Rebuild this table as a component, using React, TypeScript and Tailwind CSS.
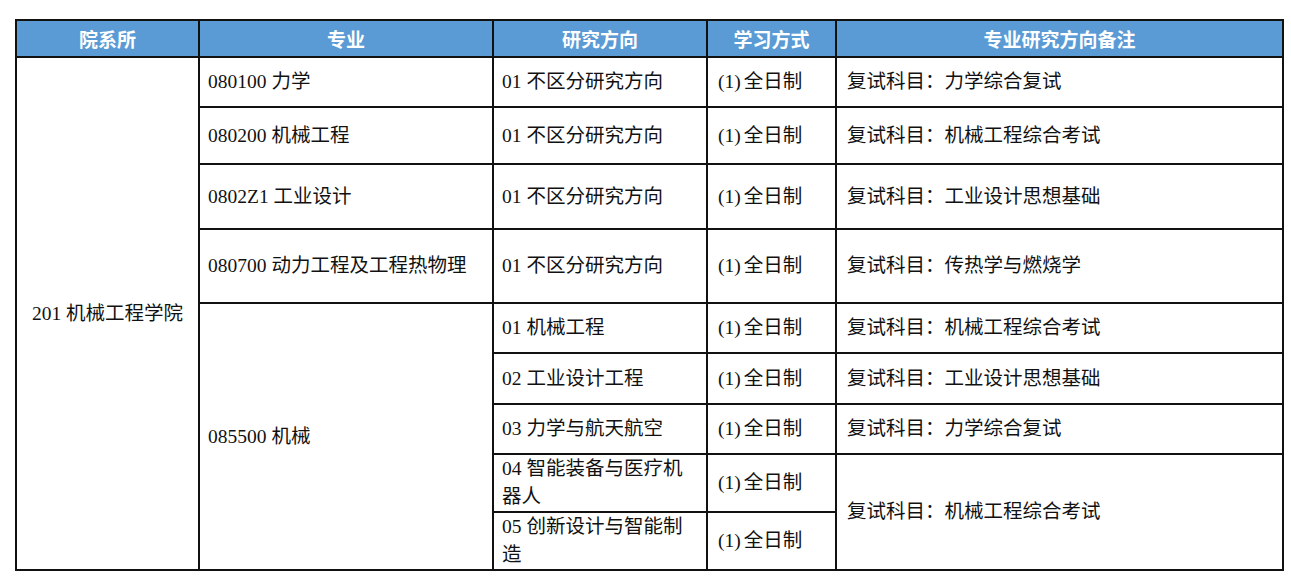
import React from 'react';

const body = 'border-2 border-[#111] px-[8px] align-middle text-left';

type Row = {
  h: string;
  major?: { text: string; span?: number };
  dir: string;
  note?: { text: string; span?: number };
};

const rows: Row[] = [
  { h: 'h-[50px]', major: { text: '080100 力学' }, dir: '01 不区分研究方向', note: { text: '复试科目：力学综合复试' } },
  { h: 'h-[57px]', major: { text: '080200 机械工程' }, dir: '01 不区分研究方向', note: { text: '复试科目：机械工程综合考试' } },
  { h: 'h-[65px]', major: { text: '0802Z1 工业设计' }, dir: '01 不区分研究方向', note: { text: '复试科目：工业设计思想基础' } },
  { h: 'h-[74px]', major: { text: '080700 动力工程及工程热物理' }, dir: '01 不区分研究方向', note: { text: '复试科目：传热学与燃烧学' } },
  { h: 'h-[50px]', major: { text: '085500 机械', span: 5 }, dir: '01 机械工程', note: { text: '复试科目：机械工程综合考试' } },
  { h: 'h-[51px]', dir: '02 工业设计工程', note: { text: '复试科目：工业设计思想基础' } },
  { h: 'h-[50px]', dir: '03 力学与航天航空', note: { text: '复试科目：力学综合复试' } },
  { h: 'h-[57px]', dir: '04 智能装备与医疗机器人', note: { text: '复试科目：机械工程综合考试', span: 2 } },
  { h: 'h-[57px]', dir: '05 创新设计与智能制造' },
];

export default function App() {
  return (
    <div className="min-h-[581px] w-[1291px] bg-white pt-[19px] pl-[15px]">
      <table
        className="w-[1267px] table-fixed border-collapse border-2 border-[#111] text-[19.5px] leading-[28px] text-[#111]"
        style={{ fontFamily: '"Liberation Serif", "Noto Sans CJK SC", serif' }}
      >
        <colgroup>
          <col className="w-[183px]" />
          <col className="w-[294px]" />
          <col className="w-[214px]" />
          <col className="w-[129px]" />
          <col className="w-[447px]" />
        </colgroup>
        <thead>
          <tr
            className="h-[37px] bg-[#5b9bd5] text-white font-bold"
            style={{ fontFamily: '"Noto Sans CJK SC", sans-serif' }}
          >
            {['院系所', '专业', '研究方向', '学习方式', '专业研究方向备注'].map((t) => (
              <th key={t} className="border-2 border-[#111] text-center align-middle text-[19px] leading-[24px] font-bold">
                {t}
              </th>
            ))}
          </tr>
        </thead>
        <tbody>
          {rows.map((r, i) => (
            <tr key={i} className={r.h}>
              {i === 0 && (
                <td rowSpan={9} className="border-2 border-[#111] text-center align-middle">
                  201 机械工程学院
                </td>
              )}
              {r.major && (
                <td rowSpan={r.major.span ?? 1} className={body}>
                  {r.major.text}
                </td>
              )}
              <td className={body}>{r.dir}</td>
              <td className={body + ' pl-[10px]'}>
                (1)<span className="ml-[3px]">全日制</span>
              </td>
              {r.note && (
                <td rowSpan={r.note.span ?? 1} className={body + ' pl-[10px]'}>
                  {r.note.text}
                </td>
              )}
            </tr>
          ))}
        </tbody>
      </table>
    </div>
  );
}
